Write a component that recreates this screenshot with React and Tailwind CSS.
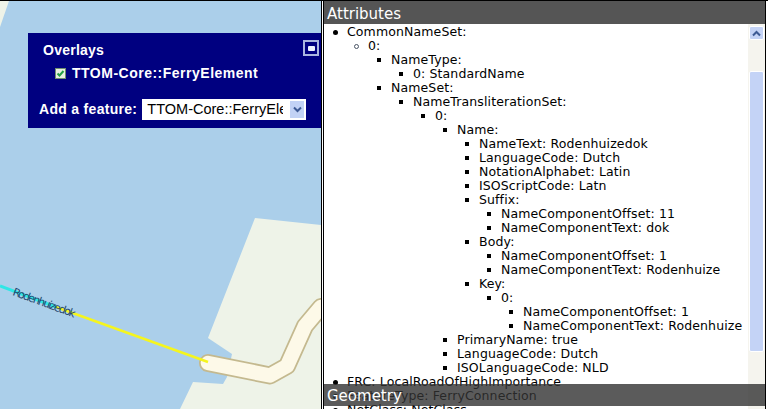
const rows = [
  [0, "disc", "CommonNameSet:"],
  [1, "circle", "0:"],
  [2, "square", "NameType:"],
  [3, "square", "0: StandardName"],
  [2, "square", "NameSet:"],
  [3, "square", "NameTransliterationSet:"],
  [4, "square", "0:"],
  [5, "square", "Name:"],
  [6, "square", "NameText: Rodenhuizedok"],
  [6, "square", "LanguageCode: Dutch"],
  [6, "square", "NotationAlphabet: Latin"],
  [6, "square", "ISOScriptCode: Latn"],
  [6, "square", "Suffix:"],
  [7, "square", "NameComponentOffset: 11"],
  [7, "square", "NameComponentText: dok"],
  [6, "square", "Body:"],
  [7, "square", "NameComponentOffset: 1"],
  [7, "square", "NameComponentText: Rodenhuize"],
  [6, "square", "Key:"],
  [7, "square", "0:"],
  [8, "square", "NameComponentOffset: 1"],
  [8, "square", "NameComponentText: Rodenhuize"],
  [5, "square", "PrimaryName: true"],
  [5, "square", "LanguageCode: Dutch"],
  [5, "square", "ISOLanguageCode: NLD"],
  [0, "disc", "FRC: LocalRoadOfHighImportance"],
  [0, "disc", "FeatureType: FerryConnection"],
  [0, "disc", "NetClass: NetClass"],
];

// left offset of each nesting level inside the list
const indents = [
  "pl-[23px]", "pl-[44px]", "pl-[67px]", "pl-[89px]", "pl-[111px]",
  "pl-[133px]", "pl-[155px]", "pl-[177px]", "pl-[199px]",
];

function Bullet({ type }) {
  if (type === "disc") return <span className="absolute left-[-14px] top-[5px] w-[5px] h-[5px] rounded-full bg-black" />;
  if (type === "circle") return <span className="absolute left-[-14px] top-[5px] w-[5px] h-[5px] rounded-full border border-gray-600" />;
  return <span className="absolute left-[-14px] top-[5px] w-[4px] h-[4px] bg-black" />;
}

function MapView() {
  const road = "M208 362L270 374.5L287 365L305 325L321 306";
  return (
    <svg viewBox="0 0 321 408" className="w-full h-full block">
      <rect width="321" height="408" fill="#abcfea" />
      <path d="M0 0H9L0 26Z" fill="#eef3e8" />
      <path d="M255 217L321 224V408H180L193 381L223 383L227 376L232 353L208 337Z" fill="#eef3e8" />
      <path d={road} fill="none" stroke="#c4b98f" strokeWidth="18" strokeLinecap="round" strokeLinejoin="round" />
      <path d={road} fill="none" stroke="#fdf9e8" strokeWidth="14.5" strokeLinecap="round" strokeLinejoin="round" />
      <path d="M0 285L56 306" stroke="#2fe6e6" strokeWidth="3" />
      <path d="M56 306L208 361" stroke="#f5f51e" strokeWidth="2.5" />
      <text x="12" y="294" fontSize="11" fill="#24476e" fontFamily="DejaVu Sans, sans-serif" transform="rotate(20 12 294)" textLength="66">Rodenhuizedok</text>
    </svg>
  );
}

export default function App() {
  return (
    <div className="relative w-[768px] h-[409px] bg-white flex font-['DejaVu_Sans',sans-serif] overflow-hidden border-t border-black">
      {/* Map side */}
      <div className="relative w-[322px] h-full border-r border-black">
        <MapView />
        <div className="absolute left-[28px] top-[32px] w-[293px] h-[95px] bg-[#000080] text-white font-bold text-[14px] font-['Liberation_Sans',sans-serif]">
          <div className="pl-[15px] pt-[8px] leading-[18px] tracking-[0.25px]">Overlays</div>
          <div className="flex items-center gap-[6px] pl-[27px] pt-[5px] leading-[18px]">
            <span className="w-[11px] h-[11px] bg-[#e8f0e0] border border-[#6f8f6f] flex items-center justify-center">
              <svg viewBox="0 0 9 9" className="w-[9px] h-[9px]">
                <path d="M1.5 4.5L3.5 6.5L7.5 2" fill="none" stroke="#22a045" strokeWidth="2" />
              </svg>
            </span>
            <span className="tracking-[0.5px]">TTOM-Core::FerryElement</span>
          </div>
          <div className="flex items-center gap-[5px] pl-[11px] pt-[17px]">
            <span className="tracking-[0.3px]">Add a feature:</span>
            <div className="w-[164px] h-[21px] bg-white text-black font-normal text-[14.5px] flex items-center justify-between pl-[5px] pr-[1px] overflow-hidden">
              <span className="w-[136px] overflow-hidden whitespace-nowrap">TTOM-Core::FerryElement</span>
              <span className="w-[16px] h-[19px] bg-[#c2d2f5] border border-white flex items-center justify-center shrink-0">
                <svg viewBox="0 0 9 7" className="w-[9px] h-[7px]">
                  <path d="M1 1.5L4.5 5L8 1.5" fill="none" stroke="#3d5a94" strokeWidth="2" />
                </svg>
              </span>
            </div>
          </div>
          <button className="absolute right-[2px] top-[7px] w-[16px] h-[16px] bg-[#000080] border-2 border-[#aab6e0] flex items-center justify-center">
            <span className="w-[7px] h-[5px] bg-[#eef2ff] rounded-[1px]" />
          </button>
        </div>
      </div>

      {/* Attributes side */}
      <div className="relative ml-[1px] w-[443px] h-full border-x border-black flex flex-col">
        <div className="h-[23px] bg-[#555555] text-white text-[15px] leading-[26px] pl-[3px] shrink-0">Attributes</div>
        <div className="flex flex-1 min-h-0">
          <div className="flex-1 overflow-hidden pt-[1px] text-[12.5px] tracking-[0.12px] leading-[14px] text-black">
            {rows.map(([level, type, text], i) => (
              <div key={i} className={`whitespace-nowrap ${indents[level]}`}>
                <span className="relative inline-block">
                  <Bullet type={type} />
                  {text}
                </span>
              </div>
            ))}
          </div>
          {/* Scrollbar */}
          <div className="w-[17px] shrink-0 bg-[#f5f4ee] flex flex-col pt-[2px] px-[1px]">
            <div className="h-[14px] bg-[#c4d3f6] border border-white rounded-[2px] flex items-center justify-center">
              <svg viewBox="0 0 9 7" className="w-[9px] h-[7px]">
                <path d="M1 5.5L4.5 2L8 5.5" fill="none" stroke="#3d5a94" strokeWidth="2" />
              </svg>
            </div>
            <div className="mt-[31px] h-[281px] bg-[#c4d3f6] border border-white rounded-[2px]" />
          </div>
        </div>
        <div className="absolute left-0 right-0 top-[383px] h-[22px] bg-[#323232]/80 text-white text-[15px] leading-[25px] pl-[3px]">Geometry</div>
      </div>
    </div>
  );
}
